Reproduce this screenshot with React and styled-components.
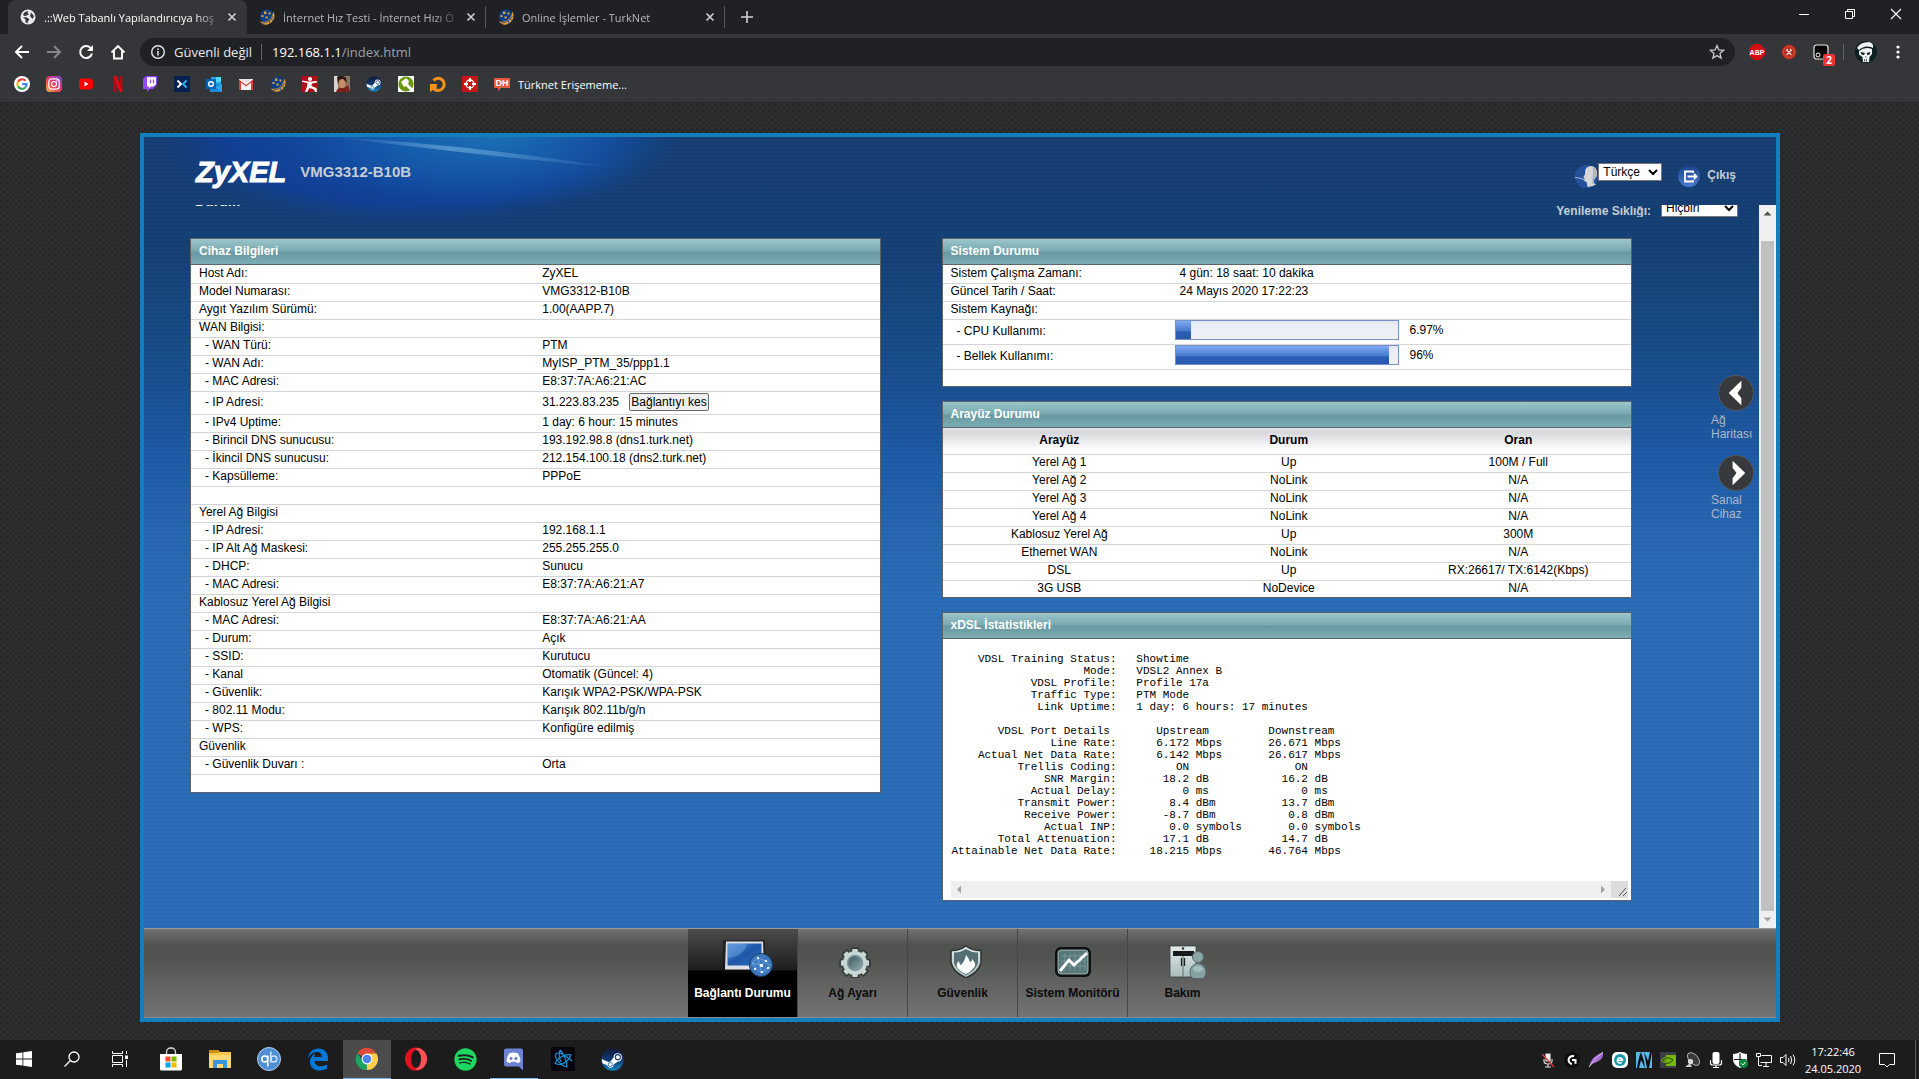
import React, { useState } from "react";
import styled, { createGlobalStyle } from 'styled-components';
import { FaSpotify } from "react-icons/fa";

const Global = createGlobalStyle`
    * { box-sizing: border-box; }
    body { margin: 0; background: #2b2c2e; }
    button, select, input, textarea { font-family: inherit; }
`;

const Screen = styled.div`
    display: flex;
    flex-direction: column;
    min-height: 100vh;
    font-family: "Liberation Sans", Arial, sans-serif;
    font-size: 12px;
`;

/* browser window */

const Browser = styled.header`
    font-family: "Open Sans", "Noto Sans", sans-serif;
    font-size: 11px;
    color: #e8eaed;
    background: #35363a;
    border-bottom: 1px solid #26272a;
`;

const TabStrip = styled.div`
    display: flex;
    height: 34px;
    padding-left: 8px;
    background: #202124;
`;

const Tab = styled.div`
    display: flex;
    align-items: center;
    width: 239px;
    padding: 0 6px 0 12px;
    border-radius: 8px 8px 0 0;
    color: ${(p) => (p.$active ? '#fff' : '#b4b8bd')};
    background: ${(p) => (p.$active ? '#35363a' : 'none')};
    border-right: 1px solid transparent;
    border-image: ${(p) => (p.$line ? 'linear-gradient(transparent 20%, #55565a 20%, #55565a 80%, transparent 80%) 1' : 'none')};
`;

const TabTitle = styled.span`
    flex: 1;
    margin: 0 4px 0 8px;
    white-space: nowrap;
    -webkit-mask-image: linear-gradient(90deg, #000 85%, transparent 102%);
    mask-image: linear-gradient(90deg, #000 85%, transparent 102%);
`;

const IconButton = styled.button`
    display: flex;
    align-items: center;
    justify-content: center;
    width: ${(p) => p.$w || 16}px;
    height: ${(p) => p.$h || 16}px;
    padding: 0;
    border: 0;
    background: none;
    color: inherit;
`;

const WindowButtons = styled.div`
    display: flex;
    margin-left: auto;
    color: #fff;
`;

const Toolbar = styled.div`
    display: flex;
    align-items: center;
    height: 36px;
    padding: 0 13px 0 6px;
`;

const Omnibox = styled.div`
    display: flex;
    flex: 1;
    align-items: center;
    height: 28px;
    margin: 0 6px;
    padding: 0 10px;
    border-radius: 14px;
    background: #202124;
    font-size: 13px;
`;

const Secure = styled.span`
    margin: 0 10px 0 8px;
    padding-right: 9px;
    border-right: 1px solid #5f6368;
    line-height: 16px;
    color: #e8eaed;
`;

const Address = styled.div`
    flex: 1;
    color: #9aa0a6;
    b { color: #fff; font-weight: 400; }
`;

const Extensions = styled.div`
    display: flex;
    align-items: center;
    gap: 16px;
    margin-left: 8px;
`;

const Divider = styled.i`
    width: 1px;
    height: 16px;
    margin: 0 -2px;
    background: #5f6368;
`;

const Avatar = styled.span`
    display: flex;
    margin: 0 -3px;
`;

const Badged = styled.span`
    position: relative;
    display: flex;
`;

const Badge = styled.span`
    position: absolute;
    left: 10px;
    top: 10px;
    width: 12px;
    height: 12px;
    border-radius: 2px;
    background: #ea3434;
    color: #fff;
    font-size: 10px;
    line-height: 12px;
    font-weight: 700;
    text-align: center;
`;

const Bookmarks = styled.nav`
    display: flex;
    align-items: center;
    gap: 16px;
    height: 32px;
    padding: 0 14px 4px;
    a { display: flex; align-items: center; gap: 8px; color: #fff; text-decoration: none; }
`;

/* router page */

const Page = styled.main`
    display: flex;
    flex: 1;
    padding: 30px 139px 18px 140px;
    background-color: #2d2e30;
    background-image: radial-gradient(circle at 1px 2px, #252628 1px, transparent 2px), radial-gradient(circle at 4px 5px, #252628 1px, transparent 2px);
    background-size: 6px 6px;
`;

const Frame = styled.div`
    position: relative;
    display: flex;
    flex: 1;
    flex-direction: column;
    border: 4px solid #137fc1;
    background:
        repeating-linear-gradient(rgba(10, 40, 90, 0.04) 0 2px, rgba(60, 140, 210, 0.03) 2px 4px),
        linear-gradient(#163d70 0, #153f73 110px, #17477f 180px, #1a4f91 250px, #1e5aa6 320px, #2767b1 400px, #2a6bb5 450px);
`;

const Flare = styled.svg`
    position: absolute;
    left: 0;
    top: 0;
`;

const RouterHeader = styled.div`
    position: relative;
    display: flex;
    align-items: flex-start;
    height: 68px;
    padding: 26px 40px 0 52px;
    color: #c5cdd6;
    font-weight: 700;
    line-height: 18px;
`;

const Logo = styled.span`
    font-size: 29px;
    font-style: italic;
    color: #fff;
    -webkit-text-stroke: 1px #fff;
`;

const Model = styled.span`
    flex: 1;
    margin-left: 14px;
    font-size: 15px;
`;

const Account = styled.div`
    display: flex;
    align-items: flex-start;
    svg { margin-top: 2px; }
`;

const Select = styled.select`
    width: ${(p) => p.$w}px;
    height: 18px;
    padding: 0;
    border: 1px solid #767676;
    border-radius: 0;
    background: #fff;
    color: #000;
    font-size: 12px;
`;

const Logout = styled.a`
    display: flex;
    align-items: center;
    gap: 7px;
    margin-left: 16px;
    color: inherit;
    text-decoration: none;
`;

const Scroller = styled.div`
    position: relative;
    display: flex;
    flex: 1;
    overflow: hidden;
`;

const Main = styled.div`
    flex: 1;
`;

/* the page is scrolled a little, so the first line is cut at its top */
const TopLine = styled.div`
    display: flex;
    align-items: flex-end;
    height: 12px;
    margin-bottom: 21px;
    padding: 0 21px 0 51px;
    overflow: hidden;
    color: #c5cdd6;
    font-weight: 700;
    label { margin-right: 10px; line-height: 12px; }
`;

const Title = styled.h1`
    flex: 1;
    margin: 0 0 8px;
    font-size: 14px;
    line-height: 16px;
    color: #fff;
`;

const Columns = styled.div`
    display: flex;
    align-items: flex-start;
    padding-left: 46px;
`;

const Cards = styled.div`
    display: flex;
    flex: 1;
    align-items: flex-start;
    gap: 61px;
`;

const Column = styled.div`
    display: flex;
    flex: 1;
    flex-direction: column;
    gap: 14px;
`;

const Card = styled.section`
    border: 1px solid #5c6368;
    background: #fff;
`;

const CardTitle = styled.h2`
    margin: 0;
    padding-left: 8px;
    height: 26px;
    font-size: 12px;
    line-height: 24px;
    color: #fff;
    border-bottom: 1px solid #59666b;
    background: linear-gradient(#9bc6cc 0, #79a9b1 12px, #6797a0 13px, #7cadb4 25px);
`;

const Table = styled.table`
    width: 100%;
    border-collapse: collapse;
    table-layout: fixed;
    td, th { height: 18px; padding: 0 0 2px; line-height: 14px; border-bottom: 1px solid #d3d5d8; white-space: nowrap; }
    tr:last-child td { border-bottom: 0; height: 17px; }
`;

const Row = styled.tr`
    height: ${(p) => (p.$tall ? 23 : 18)}px;
`;

const Label = styled.td`
    width: ${(p) => p.$w || '50%'};
    text-align: left;
    && { padding-left: ${(p) => (p.$sub ? 14 : 8)}px; }
`;

const Value = styled.td`
    && { padding-left: 7px; }
`;

const Meter = styled.td`
    && { height: 25px; padding: 0 0 3px 2px; }
    div { display: flex; align-items: center; gap: 11px; }
`;

const Bar = styled.span`
    width: 224px;
    height: 20px;
    border: 1px solid #7590c4;
    background: linear-gradient(#dfe5ec, #e9eef4 4px, #eef2f7);
    i { display: block; height: 18px; background: linear-gradient(#7fabf5, #4878cc 55%, #2c5db6 60%, #2a59ae); }
`;

const Grid = styled(Table)`
    td, th { text-align: center; padding-left: 4px; }
    th { height: 26px; background: linear-gradient(#e6e6e8, #d6d7da 4px, #fff 22px); }
`;

const DisconnectButton = styled.button`
    height: 18px;
    margin-left: 7px;
    padding: 0 1px;
    border: 1px solid #6b6b6b;
    border-radius: 2px;
    background: #efefef;
    font-size: 12px;
    line-height: 14px;
`;

const Stats = styled.div`
    padding: 2px 3px 2px 8px;
    textarea {
        display: block;
        width: 100%;
        height: 240px;
        padding: 0 1px;
        border: 0;
        outline: 0;
        resize: none;
        overflow: hidden;
        white-space: pre;
        color: #000;
        font-family: "Liberation Mono", "Courier New", monospace;
        font-size: 11px;
        line-height: 12px;
    }
`;

const HScroll = styled.div`
    display: flex;
    align-items: center;
    justify-content: space-between;
    height: 17px;
    background: #f0f0f0;
    svg { display: block; }
`;

const VScroll = styled.div`
    display: flex;
    flex-direction: column;
    align-items: center;
    width: 17px;
    background: #f0f0f0;
    svg { display: block; flex: none; }
    div { flex: 1; width: 13px; margin-top: 19px; background: #c1c1c1; }
`;

const Side = styled.nav`
    width: 127px;
    padding: 137px 0 0 79px;
`;

const SideLink = styled.a`
    display: block;
    width: 44px;
    margin-bottom: 14px;
    color: #aeb8c6;
    line-height: 14px;
    text-decoration: none;
    svg { display: block; margin: 0 0 2px 7px; }
`;

const BottomNav = styled.nav`
    display: flex;
    justify-content: center;
    height: 90px;
    padding-left: 6px;
    border-top: 1px solid #9a9a9c;
    border-bottom: 1px solid #8a8c8c;
    background: linear-gradient(#727272, #505250 16px, #525452 30px, #747474);
`;

const NavItem = styled.a`
    display: flex;
    flex-direction: column;
    align-items: center;
    width: 110px;
    padding-top: 9px;
    color: ${(p) => (p.$active ? '#fff' : '#0b0b0b')};
    background: ${(p) => (p.$active ? 'linear-gradient(#4c4c4c, #1d1d1d 41px, #000 42px)' : 'none')};
    border-right: 1px solid ${(p) => (p.$last ? 'transparent' : '#464646')};
    font-weight: 700;
    line-height: 16px;
    text-decoration: none;
    svg { margin-bottom: 7px; }
`;

/* taskbar */

const Taskbar = styled.footer`
    display: flex;
    height: 39px;
    background: #1c1c1c;
    color: #fff;
    font-family: "Open Sans", "Noto Sans", sans-serif;
`;

const Apps = styled.div`
    display: flex;
    gap: 1px;
    margin-left: 3px;
`;

const TaskButton = styled.button`
    display: flex;
    align-items: center;
    justify-content: center;
    width: 48px;
    padding: 0;
    border: 0;
    border-bottom: 1px solid ${(p) => (p.$open ? '#76b9ed' : 'transparent')};
    background: ${(p) => (p.$active ? '#4b4b4b' : 'none')};
    color: inherit;
`;

const Tray = styled.div`
    display: flex;
    align-items: center;
    gap: 8px;
    margin-left: auto;
    padding-right: 3px;
`;

const Clock = styled.time`
    width: 58px;
    font-size: 11px;
    line-height: 17px;
    text-align: center;
    white-space: nowrap;
`;

const TrayEnd = styled.i`
    width: 1px;
    height: 39px;
    margin-left: 3px;
    background: #5a5a5a;
`;

const Svg = ({ s = 16, w, h, box = '0 0 16 16', children }) => (
    <svg width={w || s} height={h || s} viewBox={box} fill="none" aria-hidden="true">{children}</svg>
);

const Close = () => <Svg s={16}><path d="M4.500 4.500l7 7m0-7l-7 7" stroke="#d0d2d5" strokeWidth="1.600" /></Svg>;

const Globe = () => (
    <Svg>
        <circle cx="8" cy="8" r="7.500" fill="#e8eaed" />
        <path d="M3 6q1-3.500 5-4L7.500 4 9 5 7 6.500 4.500 7z M3 8l4 .5 2.500 2L8 12l-.5 2.500L5.500 13V10.500z M11 3.500l3 3.500-1.500 3-2.500-3z" fill="#35363a" />
    </Svg>
);

const TurkNet = () => (
    <Svg>
        <circle cx="8" cy="7.500" r="7" fill="#0b3f8c" />
        <path d="M14.500 2.500c2.500 5 .5 11-6 13-3 .8-6-.5-7.500-3 6 1.500 12-1.500 13.500-10z" fill="#e9a032" />
        <path d="M3 14c5 0 9-2.500 11.500-7M11 15l-1-4M14 12l-2-3" stroke="#0b3f8c" strokeWidth=".8" />
        <path d="M5 2.500h2.400v2.400H5zM9.500 3.500h2v2h-2zM2.500 6h2v2h-2zM6.500 7.500h2.200v2H6.500z" fill="#e9a032" />
    </Svg>
);

const Steam = ({ s }) => (
    <Svg s={s} box="0 0 24 24">
        <defs><linearGradient id="st" x1="0" y1="0" x2="0" y2="1"><stop offset="0" stopColor="#141a3a" /><stop offset=".5" stopColor="#10386f" /><stop offset="1" stopColor="#1687bd" /></linearGradient></defs>
        <circle cx="12" cy="12" r="11.800" fill="url(#st)" />
        <path d="M.8 11.500l7 3a3.500 3.500 0 0 1 2-.2l3.400-4.600a4.300 4.300 0 1 1 4.500 4.300l-4.600 3.300a3.400 3.400 0 0 1-6.700.8L1.500 16z" fill="#fff" />
        <circle cx="17.600" cy="9.600" r="2.700" fill="#fff" stroke="#10386f" strokeWidth="1.100" />
        <circle cx="9.700" cy="17.200" r="2.100" fill="none" stroke="#1668a0" strokeWidth=".9" />
    </Svg>
);

const bookmarks = [
    ['Google', <Svg>
        <circle cx="8" cy="8" r="8" fill="#fff" />
        <path d="M11.600 4.800A4.700 4.700 0 0 0 4 5.700" stroke="#ea4335" strokeWidth="2.200" />
        <path d="M4 5.700a4.600 4.600 0 0 0 0 4.700" stroke="#fbbc05" strokeWidth="2.200" />
        <path d="M4 10.400a4.700 4.700 0 0 0 7.300 1.100" stroke="#34a853" strokeWidth="2.200" />
        <path d="M11.300 11.500c1-.9 1.400-2 1.300-3.400H8.200" stroke="#4285f4" strokeWidth="2.200" />
    </Svg>],
    ['Instagram', <Svg>
        <defs><linearGradient id="ig" x1="0" y1="1" x2="1" y2="0"><stop offset="0" stopColor="#fdc04c" /><stop offset=".35" stopColor="#f4514b" /><stop offset=".65" stopColor="#cd3494" /><stop offset="1" stopColor="#5c53d2" /></linearGradient></defs>
        <rect width="16" height="16" rx="4" fill="url(#ig)" />
        <rect x="2.800" y="2.800" width="10.400" height="10.400" rx="3" stroke="#fff" strokeWidth="1.200" />
        <circle cx="8" cy="8" r="2.500" stroke="#fff" strokeWidth="1.200" /><circle cx="11" cy="5" r=".8" fill="#fff" />
    </Svg>],
    ['YouTube', <Svg><rect x="1" y="2.500" width="14" height="11" rx="3" fill="#f00" /><path d="M6.500 5.500v5l4-2.500z" fill="#fff" /></Svg>],
    ['Netflix', <Svg><path d="M3.500 0h3v16h-3zM9.500 0h3v16h-3z" fill="#b00b14" /><path d="M3.500 0h3l6 16h-3z" fill="#e50914" /></Svg>],
    ['Twitch', <Svg><path d="M4 0h11v9l-4 4H8l-3 3v-3H1V3z" fill="#9146ff" /><path d="M5 1.200h9V8l-2.500 2.500H9l-2 2v-2H5z" fill="#fff" /><path d="M8.500 3.500v3.800M11.500 3.500v3.800" stroke="#9146ff" strokeWidth="1.300" /></Svg>],
    ['Mixer', <Svg><rect width="16" height="16" fill="#062052" /><path d="M3.500 4.500L7 8l-3.500 3.500" stroke="#fff" strokeWidth="1.900" /><path d="M12.500 4.500L9 8l3.500 3.500" stroke="#1fbaed" strokeWidth="1.900" /></Svg>],
    ['Outlook', <Svg>
        <path d="M5 1h10v9H5z" fill="#28a8ea" /><path d="M10 1h5v5h-5z" fill="#50d9ff" /><path d="M4 8l12 0v8H4z" fill="#1490df" /><path d="M16 8v8L9 11z" fill="#28a8ea" />
        <rect y="3" width="10" height="10" rx="1" fill="#0364b8" /><circle cx="5" cy="8" r="2.300" stroke="#fff" strokeWidth="1.400" />
    </Svg>],
    ['Gmail', <Svg><path d="M1 3h14v11H1z" fill="#f1f1f1" /><path d="M1 14V3.500L8 9l7-5.500V14h-2V6.500L8 10.500 3 6.500V14z" fill="#d93f35" /><path d="M3 3h10L8 7z" fill="#e6e0df" /></Svg>],
    ['TurkNet', <TurkNet />],
    ['Spor', <Svg><rect width="16" height="16" fill="#b00d17" /><circle cx="8" cy="3" r="2.100" fill="#fff" /><path d="M0 4.500l6 1h3l6-.5v1.500l-5 1-.5 2.500 5 2 .5 4h-2l-1-2.500-4.500-1.500L5 16H3l2-5.500L5.500 7 0 6z" fill="#fff" /></Svg>],
    ['Portre', <Svg><rect width="16" height="16" fill="#8a7560" /><path d="M0 0h4v16H0z" fill="#d9d4c9" /><path d="M3 1q5-3 9 1l1 5-2-2H5L4 9z" fill="#2c1712" /><ellipse cx="8" cy="7.500" rx="3.300" ry="4.500" fill="#c98d66" /><path d="M2 16q1-4 5-4l3 0 4-3 2 7z" fill="#7c2019" /></Svg>],
    ['Steam', <Steam s={16} />],
    ['Anahtar', <Svg><rect width="16" height="16" fill="#fff" /><circle cx="8" cy="8" r="7.600" fill="#6b9710" /><path d="M3 6l5-4 3 3-1 3 5 5-2 2-5-5-2 1z" fill="#fff" /></Svg>],
    ['Yenile', <Svg><path d="M3.500 4.500A6 6 0 1 1 6 14" stroke="#f6911e" strokeWidth="3" /><path d="M0 8l7 0-1 8-3-2-3 2z" fill="#f6911e" /></Svg>],
    ['Hedef', <Svg><rect width="16" height="16" fill="#c81414" /><circle cx="8" cy="8" r="4" stroke="#fff" strokeWidth="1.300" /><path d="M8 2v4M8 10v4M2 8h4M10 8h4" stroke="#fff" strokeWidth="2" /></Svg>],
];

const infoRows = [
    ['Host Adı:', 'ZyXEL'],
    ['Model Numarası:', 'VMG3312-B10B'],
    ['Aygıt Yazılım Sürümü:', '1.00(AAPP.7)'],
    ['WAN Bilgisi:'],
    ['- WAN Türü:', 'PTM'],
    ['- WAN Adı:', 'MyISP_PTM_35/ppp1.1'],
    ['- MAC Adresi:', 'E8:37:7A:A6:21:AC'],
    ['- IP Adresi:', '31.223.83.235', 'Bağlantıyı kes'],
    ['- IPv4 Uptime:', '1 day: 6 hour: 15 minutes'],
    ['- Birincil DNS sunucusu:', '193.192.98.8 (dns1.turk.net)'],
    ['- İkincil DNS sunucusu:', '212.154.100.18 (dns2.turk.net)'],
    ['- Kapsülleme:', 'PPPoE'],
    [''],
    ['Yerel Ağ Bilgisi'],
    ['- IP Adresi:', '192.168.1.1'],
    ['- IP Alt Ağ Maskesi:', '255.255.255.0'],
    ['- DHCP:', 'Sunucu'],
    ['- MAC Adresi:', 'E8:37:7A:A6:21:A7'],
    ['Kablosuz Yerel Ağ Bilgisi'],
    ['- MAC Adresi:', 'E8:37:7A:A6:21:AA'],
    ['- Durum:', 'Açık'],
    ['- SSID:', 'Kurutucu'],
    ['- Kanal', 'Otomatik (Güncel: 4)'],
    ['- Güvenlik:', 'Karışık WPA2-PSK/WPA-PSK'],
    ['- 802.11 Modu:', 'Karışık 802.11b/g/n'],
    ['- WPS:', 'Konfigüre edilmiş'],
    ['Güvenlik'],
    ['- Güvenlik Duvarı :', 'Orta'],
    [''],
];

const interfaces = [
    ['Yerel Ağ 1', 'Up', '100M / Full'],
    ['Yerel Ağ 2', 'NoLink', 'N/A'],
    ['Yerel Ağ 3', 'NoLink', 'N/A'],
    ['Yerel Ağ 4', 'NoLink', 'N/A'],
    ['Kablosuz Yerel Ağ', 'Up', '300M'],
    ['Ethernet WAN', 'NoLink', 'N/A'],
    ['DSL', 'Up', 'RX:26617/ TX:6142(Kbps)'],
    ['3G USB', 'NoDevice', 'N/A'],
];

const line = (name, value) => name.padStart(25) + '   ' + value;
const port = (name, up, down, unit = '') =>
    name.padStart(25) + up.padStart(11) + (' ' + unit).padEnd(11) + down.padStart(7) + ' ' + unit;

const xdslText = [
    '',
    line('VDSL Training Status:', 'Showtime'),
    line('Mode:', 'VDSL2 Annex B'),
    line('VDSL Profile:', 'Profile 17a'),
    line('Traffic Type:', 'PTM Mode'),
    line('Link Uptime:', '1 day: 6 hours: 17 minutes'),
    '',
    line('VDSL Port Details ', '   Upstream         Downstream'),
    port('Line Rate:', '6.172', '26.671', 'Mbps'),
    port('Actual Net Data Rate:', '6.142', '26.617', 'Mbps'),
    port('Trellis Coding:', 'ON', 'ON'),
    port('SNR Margin:', '18.2', '16.2', 'dB'),
    port('Actual Delay:', '0', '0', 'ms'),
    port('Transmit Power:', '8.4', '13.7', 'dBm'),
    port('Receive Power:', '-8.7', '0.8', 'dBm'),
    port('Actual INP:', '0.0', '0.0', 'symbols'),
    port('Total Attenuation:', '17.1', '14.7', 'dB'),
    port('Attainable Net Data Rate:', '18.215', '46.764', 'Mbps'),
].join('\n');

const metal = (
    <defs>
        <linearGradient id="mt" x1="0" y1="0" x2="0" y2="1"><stop offset="0" stopColor="#e3eceb" /><stop offset="1" stopColor="#a9bbbb" /></linearGradient>
        <linearGradient id="dk" x1="0" y1="0" x2="1" y2="1"><stop offset="0" stopColor="#3c5358" /><stop offset="1" stopColor="#8fb0b2" /></linearGradient>
        <linearGradient id="bl" x1="0" y1="0" x2="1" y2="1"><stop offset="0" stopColor="#4f8fd6" /><stop offset=".5" stopColor="#1e57a8" /><stop offset="1" stopColor="#2f6fc0" /></linearGradient>
    </defs>
);

const navItems = [
    ['Bağlantı Durumu', <Svg w={60} h={40} box="0 -1 60 40">
        {metal}
        <path d="M10 1h42v33H9z" fill="#111" opacity=".5" />
        <path d="M13 2.500h37l1 28H12z" fill="#dfe2e6" /><path d="M14.500 4.500h34v22h-34z" fill="url(#bl)" />
        <path d="M14.500 4.500h20q-3 12-20 15z" fill="#7fb2ea" opacity=".4" />
        <circle cx="48" cy="26" r="11.500" fill="#3f78bf" stroke="#16395f" />
        <path d="M39 24l6-5 8 3 4 6-9 6-5-5zM45 19l3 15M53 22l-5 4-9-2" stroke="#7db4ea" strokeWidth=".7" />
        <path d="M44 18h2v2h-2zM52 21h2v2h-2zM47 25h3v3h-3zM41 29h2v2h-2zM54 28h2v2h-2zM48 32h2v2h-2z" fill="#e8f4ff" />
    </Svg>],
    ['Ağ Ayarı', <Svg w={40} h={40} box="-22 -25 40 40">
        <g stroke="#383d3d" strokeWidth="2">{[0, 45, 90, 135].map((a) => <rect key={a} x="-3.500" y="-15" width="7" height="30" rx="1" fill="#b9c8c8" transform={`rotate(${a})`} />)}</g>
        <circle r="12" fill="#c9d6d6" />
        {[0, 45, 90, 135].map((a) => <rect key={a} x="-2.500" y="-14" width="5" height="28" rx="1" fill="#c9d6d6" transform={`rotate(${a})`} />)}
        <circle r="7.500" fill="url(#dk)" stroke="#80979b" strokeWidth="1.500" />
    </Svg>],
    ['Güvenlik', <Svg w={40} h={40} box="-23 -24 40 40">
        <path d="M0-16q7 5 15 4.500v12Q13 10 0 16-13 10-15 .5v-12Q-7-11 0-16z" fill="url(#mt)" stroke="#2b3030" strokeWidth="1.500" />
        <path d="M0-13q6 4 12 3.500V1Q10 8 0 13-10 8-12 1V-9.500Q-6-9 0-13z" fill="#557074" />
        <path d="M0-7q3 3 4 7 2 0 2-3 4 4 3 7-3 5-9 8-7-3-9-7-1-4 2-6 0 3 2 4 4-4 5-10z" fill="#fff" />
    </Svg>],
    ['Sistem Monitörü', <Svg w={40} h={40} box="-20 -24 40 40">
        <rect x="-18" y="-15" width="36" height="30" rx="6" fill="#0a1110" />
        <rect x="-15" y="-12" width="30" height="24" rx="3" fill="#58777a" stroke="#bccccc" strokeWidth=".8" />
        <path d="M-8-9V9M-3-9V9M2-9V9M7-9V9M12-9V9M-12-6h24M-12-1h24M-12 4h24" stroke="#8ba7a8" strokeWidth=".6" />
        <path d="M-13 9L-4-2l5 5L14-9" stroke="#fff" strokeWidth="2.800" />
    </Svg>],
    ['Bakım', <Svg w={56} h={40} box="-36 -24 56 40">
        <path d="M-21-16H5v31h-26z" fill="url(#mt)" stroke="#3b4141" strokeWidth=".8" />
        <path d="M-18-11H3v5h-21z" fill="#161c1c" /><path d="M-8-6V15" stroke="#5d6a6a" strokeWidth="1" /><path d="M-9.500-4v8M-6.500-4v8" stroke="#1b2222" strokeWidth="1.300" />
        <circle cx="-8" cy="-13.500" r="1.300" fill="#333" />
        <circle cx="7" cy="-5" r="5.500" fill="#89a5a6" stroke="#57696a" /><ellipse cx="7" cy="10" rx="8" ry="8.500" fill="#86a3a4" stroke="#57696a" /><ellipse cx="7" cy="7" rx="5" ry="3" fill="#b3cbcb" opacity=".7" />
    </Svg>],
];

const apps = [
    ['Store', <Svg s={24} box="0 0 24 24"><path d="M7.500 7V5a4 4 0 0 1 4-4h1a4 4 0 0 1 4 4v2" stroke="#ddd" strokeWidth="1.300" /><path d="M1 7h22v15a1.500 1.500 0 0 1-1.500 1.500h-19A1.500 1.500 0 0 1 1 22z" fill="#fff" /><path d="M6.500 9.500h5v5h-5z" fill="#f25022" /><path d="M12.500 9.500h5v5h-5z" fill="#7fba00" /><path d="M6.500 15.500h5v5h-5z" fill="#00a4ef" /><path d="M12.500 15.500h5v5h-5z" fill="#ffb900" /></Svg>],
    ['Dosya Gezgini', <Svg s={24} box="0 0 24 24"><path d="M1 3h9l2 2h11v16H1z" fill="#f8c545" /><path d="M1 3h9l1 3H1z" fill="#c98e15" /><path d="M1 8h22v13H1z" fill="#fcd873" /><path d="M5 13h14v8h-4v-4H9v4H5z" fill="#3b96dd" /></Svg>],
    ['qBittorrent', <Svg s={24} box="0 0 24 24"><circle cx="12" cy="12" r="11.500" fill="#4f8fd4" stroke="#b5d0ee" /><circle cx="7.800" cy="12" r="3" stroke="#fff" strokeWidth="1.500" /><path d="M10.800 8.500v11" stroke="#fff" strokeWidth="1.500" /><circle cx="16.800" cy="12" r="3" stroke="#cfe3f8" strokeWidth="1.500" /><path d="M13.800 4.500v11" stroke="#cfe3f8" strokeWidth="1.500" /></Svg>],
    ['Edge', <Svg s={24} box="0 0 24 24"><path d="M2 11C3 5 7 1.500 12.500 1.500c6 0 9.500 4.500 9.500 9.500v3H8.500c.3 5 6 7 12.500 3.500v4.300C12 26 3.500 22 4 14c.3-4 3-6.500 5.500-7.500C8.300 8 8.300 9.500 8.300 10h7.500c0-3-1.500-5-5-5C7 5 4 8 2 11z" fill="#0078d7" /></Svg>],
    ['Chrome', <Svg s={24} box="0 0 24 24"><path d="M12 12L2.500 6A11 11 0 0 1 21.500 6.500H12z" fill="#dd4b3e" /><path d="M12 12l9.500-5.500A11 11 0 0 1 11.500 23z" fill="#fdd04f" /><path d="M12 12l-.5 11A11 11 0 0 1 2.500 6l5 8.500z" fill="#1ba462" /><path d="M12 6.500h9.500L17 14.500l-5.500 8.500 4.500-9z" fill="#fdd04f" /><circle cx="12" cy="12" r="5.400" fill="#fff" /><circle cx="12" cy="12" r="4.300" fill="#4a84ee" /></Svg>],
    ['Opera', <Svg s={24} box="0 0 24 24"><ellipse cx="12" cy="12" rx="11" ry="11.500" fill="#e3101f" /><path d="M14 .8a11.500 11.500 0 0 1 0 22.500l-3-1.300c8-4 8-16 0-20z" fill="#fa5059" /><ellipse cx="12" cy="12" rx="5" ry="9" fill="#1c1c1c" /></Svg>],
    ['Spotify', <FaSpotify size={23} color="#1ed760" />],
    ['Discord', <Svg s={24} box="0 0 24 24"><path d="M4 1.500h15a2 2 0 0 1 2 2v20l-4-4H4a2 2 0 0 1-2-2v-14a2 2 0 0 1 2-2z" fill="#6d83d1" /><path d="M7 6.500q4.500-2 9 0 2.500 4 2.500 8-2 1.700-4 1.500l-.8-1.300h-4.400L8.500 16q-2 .2-4-1.500 0-4 2.500-8z" fill="#fff" /><ellipse cx="9" cy="11.500" rx="1.500" ry="1.700" fill="#6d83d1" /><ellipse cx="14" cy="11.500" rx="1.500" ry="1.700" fill="#6d83d1" /></Svg>],
    ['Battle.net', <Svg s={24} box="0 0 24 24"><rect width="24" height="24" rx="1.500" fill="#04060b" /><g stroke="#1593dd" strokeWidth="1.200"><path d="M9 3q3 3 5 8t2 9q-5-1-9-6t-2-7 6 0 10 7M4 16q3-5 8-7t8-1q-2 5-7 8t-9 0zM9 3q-2 6 1 12" /></g></Svg>],
    ['Steam', <Steam s={23} />],
];

const tray = [
    <Svg><path d="M6 2h4v7H6zM4 7v2q0 3 4 3t4-3V7M8 12v3M5 15h6" stroke="#ddd" strokeWidth="1.200" /><path d="M6 2h4v7H6z" fill="#eee" /><path d="M2 2l12 13" stroke="#e0393c" strokeWidth="1.400" /></Svg>,
    <Svg><circle cx="8" cy="8" r="8" fill="#0f0f0f" /><path d="M10 4.300A4 4 0 1 0 8 12M8 8h3.500v3.800" stroke="#fff" strokeWidth="2" /></Svg>,
    <Svg><path d="M1 15Q3 4 15 0q1 7-6 10l-5 2z" fill="#a36bd0" /><path d="M1 15Q6 7 15 0" stroke="#d9b8f0" /></Svg>,
    <Svg><rect width="16" height="16" rx="5" fill="#f4fbfb" /><circle cx="8" cy="8" r="6" fill="#1b98a5" /><path d="M5.500 8.200h5A2.600 2.600 0 1 0 9.800 10.300" stroke="#fff" strokeWidth="1.600" /></Svg>,
    <Svg><rect width="16" height="16" fill="#5ab8e6" /><path d="M1 16Q3 4 5 0l3 9 1 7L5 8l-2 8zM8 0q3 6 4 9l2-9h2l-3 16h-2z" fill="#0b1014" /></Svg>,
    <Svg><rect width="16" height="16" fill="#3b4048" /><path d="M6 3h10v11H6z" fill="#76b900" /><path d="M1 8.500Q7 2 13 8q-5 6-12 .5zM4 8.500q3-3 6 0-3 3-6 0z" stroke="#76b900" /><path d="M6 6q4-1 7 2-3 4-7 3.500" stroke="#26400a" /></Svg>,
    <Svg><ellipse cx="9.500" cy="7" rx="4.500" ry="7.500" transform="rotate(-42 9.500 7)" fill="#3a3a3a" stroke="#aaa" /><circle cx="6.500" cy="9.500" r="2.600" fill="#ddd" /><path d="M1 15l5-4 2 4z" fill="#ccc" /></Svg>,
    <Svg><rect x="4.500" y="0" width="7" height="12" rx="2" fill="#fff" /><path d="M2.500 8v3q0 2 2 2h7q2 0 2-2V8M8 13v2M5 15.500h6" stroke="#fff" strokeWidth="1.100" /></Svg>,
    <Svg><path d="M8 0q3 2 7 2v5q0 6-7 9Q1 13 1 7V2q4 0 7-2z" fill="#fff" /><path d="M8 1.500V14M2 7.500h12" stroke="#1c1c1c" strokeWidth="1.200" /><circle cx="11.500" cy="11.500" r="4.500" fill="#10893e" /><path d="M9.500 11.500l1.500 1.500 2.500-3" stroke="#fff" /></Svg>,
    <Svg><path d="M5.500 3.500h10v7h-11M10 10.500v3.500M7 14.500h6M.5 1.500h4v3h-4zM2.500 4.500v9H6" stroke="#fff" /></Svg>,
    <Svg><path d="M.5 5.500h2.500l3-3v11l-3-3H.5zM8.500 6q1 2 0 4M10.500 4q2.500 4 0 8M13 2.500q3.500 5.500 0 11" stroke="#fff" /></Svg>,
];

const Arrow = ({ d, fill = '#505050' }) => <Svg s={17} box="0 0 17 17"><path d={d} fill={fill} /></Svg>;

const sideLinks = [
    ['Ağ Haritası', 'M24 6v7l-4 5.500 4 5.500v7L11 18.500z'],
    ['Sanal Cihaz', 'M15 6v7l4 5.500-4 5.500v7l13-12.500z'],
];

function App() {

    const [lang, setLang] = useState('Türkçe');
    const [refresh, setRefresh] = useState('Hiçbiri');

    return (
        <Screen>
            <Global />
            <Browser>
                <TabStrip>
                    <Tab $active>
                        <Globe /><TabTitle>.::Web Tabanlı Yapılandırıcıya hoş</TabTitle>
                        <IconButton aria-label="Kapat"><Close /></IconButton>
                    </Tab>
                    <Tab $line>
                        <TurkNet /><TabTitle>İnternet Hız Testi - İnternet Hızı Ö</TabTitle>
                        <IconButton aria-label="Kapat"><Close /></IconButton>
                    </Tab>
                    <Tab $line>
                        <TurkNet /><TabTitle>Online İşlemler - TurkNet</TabTitle>
                        <IconButton aria-label="Kapat"><Close /></IconButton>
                    </Tab>
                    <IconButton aria-label="Yeni sekme" $w={44} $h={34}><Svg><path d="M8 2v12M2 8h12" stroke="#d0d2d5" strokeWidth="1.600" /></Svg></IconButton>
                    <WindowButtons>
                        <IconButton aria-label="Simge durumu" $w={46} $h={28}><Svg><path d="M3 8.500h10" stroke="#fff" /></Svg></IconButton>
                        <IconButton aria-label="Geri yükle" $w={46} $h={28}><Svg><path d="M3.500 5.500h7v7h-7zM5.500 5.500v-2h7v7h-2" stroke="#fff" /></Svg></IconButton>
                        <IconButton aria-label="Kapat" $w={46} $h={28}><Svg><path d="M3 3l10 10M13 3L3 13" stroke="#fff" strokeWidth="1.200" /></Svg></IconButton>
                    </WindowButtons>
                </TabStrip>
                <Toolbar>
                    <IconButton aria-label="Geri" $w={32} $h={32}><Svg><path d="M15 8H2M8 2L2 8l6 6" stroke="#fff" strokeWidth="2" /></Svg></IconButton>
                    <IconButton aria-label="İleri" $w={32} $h={32}><Svg><path d="M1 8h13M8 2l6 6-6 6" stroke="#85878a" strokeWidth="2" /></Svg></IconButton>
                    <IconButton aria-label="Yenile" $w={32} $h={32}><Svg><path d="M13 4.500A6 6 0 1 0 14 9.500" stroke="#fff" strokeWidth="2" /><path d="M15 1v6H9z" fill="#fff" /></Svg></IconButton>
                    <IconButton aria-label="Ana sayfa" $w={32} $h={32}><Svg><path d="M1.500 8.500L8 2l6.500 6.500M4 7v7.500h8V7" stroke="#fff" strokeWidth="1.900" /></Svg></IconButton>
                    <Omnibox>
                        <Svg><circle cx="8" cy="8" r="6.300" stroke="#e8eaed" strokeWidth="1.400" /><path d="M8 7v4.500M8 4.500V6" stroke="#e8eaed" strokeWidth="1.500" /></Svg>
                        <Secure>Güvenli değil</Secure>
                        <Address><b>192.168.1.1</b>/index.html</Address>
                        <IconButton aria-label="Yer işareti"><Svg><path d="M8 1.500l1.900 4.400 4.700.4-3.600 3.100 1.100 4.700L8 11.600l-4.100 2.500L5 9.400 1.400 6.300l4.700-.4z" stroke="#c7c9cc" strokeWidth="1.300" /></Svg></IconButton>
                    </Omnibox>
                    <Extensions>
                        <Svg><path d="M5 0h6l5 5v6l-5 5H5l-5-5V5z" fill="#d40d12" /><text x="8" y="11" fill="#fff" fontFamily="Liberation Sans" fontSize="7" fontWeight="700" textAnchor="middle">ABP</text></Svg>
                        <Svg><circle cx="8" cy="8" r="7.500" fill="#b02a1c" /><circle cx="8" cy="8" r="5.500" stroke="#d95543" /><path d="M5.500 6l5 5M10.500 6l-5 5M5 6.500l2-1.500M11 6.500L9 5" stroke="#f3d3cd" strokeWidth="1.200" /></Svg>
                        <Badged>
                            <Svg><rect x="1" y="1" width="14" height="14" rx="2.500" fill="#050505" stroke="#e9e9e9" strokeWidth="1.200" /><circle cx="5" cy="11" r="2" stroke="#fff" /></Svg>
                            <Badge>2</Badge>
                        </Badged>
                        <Divider />
                        <Avatar>
                            <Svg s={22} box="0 0 22 22"><circle cx="11" cy="11" r="11" fill="#0e2022" /><path d="M2 7Q5 1 14 1q5 1 4 6l-2-1Q9 4 4 9z" fill="#eef1ef" /><path d="M4 10q6-5 13-2l0 5-2.500 3-.5 5h-6l-.5-5L4 13.500z" fill="#eef1ef" /><path d="M5.500 11l4.500 1-1 2-2.500-.5zM15.500 11l-4 1 1 2 2-.5z" fill="#0e2022" /><path d="M9.500 18v2.500M11.500 18v2.500M10 16h1.500" stroke="#0e2022" strokeWidth=".7" /></Svg>
                        </Avatar>
                        <Svg><circle cx="8" cy="3" r="1.600" fill="#fff" /><circle cx="8" cy="8" r="1.600" fill="#fff" /><circle cx="8" cy="13" r="1.600" fill="#fff" /></Svg>
                    </Extensions>
                </Toolbar>
                <Bookmarks>
                    {bookmarks.map(([name, icon], index) => (
                        <a href="#" key={index} aria-label={name}>{icon}</a>
                    ))}
                    <a href="#">
                        <Svg><path d="M0 2h16v10H7l-3 3v-3H0z" fill="#e8583f" /><text x="8" y="10" fill="#fff" fontFamily="Liberation Sans" fontSize="9" fontWeight="700" textAnchor="middle">DH</text></Svg>
                        Türknet Erişememe...
                    </a>
                </Bookmarks>
            </Browser>

            <Page>
                <Frame>
                    <Flare width="560" height="110" viewBox="0 0 560 110">
                        <defs>
                            <radialGradient id="f1" cx=".5" cy="0" r=".5" gradientTransform="matrix(1 0 0 2 0 0)"><stop offset="0" stopColor="#1155ac" /><stop offset=".7" stopColor="#113f9c" stopOpacity=".8" /><stop offset="1" stopColor="#133c80" stopOpacity="0" /></radialGradient>
                            <radialGradient id="f2" cx=".62" cy="0" r=".34" gradientTransform="matrix(1 0 0 2.200 0 0)"><stop offset="0" stopColor="#1c70b4" /><stop offset="1" stopColor="#1560b0" stopOpacity="0" /></radialGradient>
                            <linearGradient id="f3"><stop offset="0" stopColor="#8cc4ea" stopOpacity="0" /><stop offset=".4" stopColor="#8cc4ea" stopOpacity=".5" /><stop offset="1" stopColor="#8cc4ea" stopOpacity="0" /></linearGradient>
                        </defs>
                        <rect width="540" height="96" fill="url(#f1)" />
                        <rect width="560" height="96" fill="url(#f2)" />
                        <path d="M190 0Q330 8 480 32 350 20 190 0z" fill="url(#f3)" />
                    </Flare>
                    <RouterHeader>
                        <Logo>ZyXEL</Logo>
                        <Model>VMG3312-B10B</Model>
                        <Account>
                            <Svg s={23} box="0 0 22 22"><circle cx="11" cy="11" r="11" fill="#27509c" /><path d="M0 12q8 0 14 6" stroke="#9db6dd" /><path d="M10 4q2-3 6-3 5 1 5 7 0 4-3 6v3l2 2q-3 2-8 2l-1-5-2-.5 0-3-1-1 1.500-2.500z" fill="#d5d7d8" /><path d="M17 2q4 1 4 6 0 4-3 6v3l2 2-4-1 1-8z" fill="#b5b8bb" /></Svg>
                            <Select $w={64} aria-label="Dil" value={lang} onChange={(event) => setLang(event.target.value)}>
                                <option>Türkçe</option>
                                <option>English</option>
                            </Select>
                            <Logout href="#">
                                <Svg s={22} box="0 0 22 22"><defs><linearGradient id="lo" x1="0" y1="0" x2="0" y2="1"><stop offset="0" stopColor="#1b3f86" /><stop offset="1" stopColor="#4a7bd0" /></linearGradient></defs><circle cx="11" cy="11" r="11" fill="url(#lo)" /><path d="M15 8V6.500H7v10h8V15M9.500 11.500H18M16 9l2.500 2.500L16 14" stroke="#fff" strokeWidth="1.800" /></Svg>
                                Çıkış
                            </Logout>
                        </Account>
                    </RouterHeader>
                    <Scroller>
                        <Main>
                            <TopLine>
                                <Title>Durum</Title>
                                <label htmlFor="refresh">Yenileme Sıklığı:</label>
                                <Select $w={77} id="refresh" value={refresh} onChange={(event) => setRefresh(event.target.value)}>
                                    <option>Hiçbiri</option>
                                    <option>10 saniye</option>
                                </Select>
                            </TopLine>
                            <Columns>
                                <Cards>
                                    <Column>
                                        <Card>
                                            <CardTitle>Cihaz Bilgileri</CardTitle>
                                            <Table>
                                                <tbody>
                                                    {infoRows.map(([label, value, action], index) => (
                                                        <Row key={index} $tall={action}>
                                                            <Label $sub={label.startsWith('-')}>{label}</Label>
                                                            <Value>{value}{action && <>&nbsp;<DisconnectButton>{action}</DisconnectButton></>}</Value>
                                                        </Row>
                                                    ))}
                                                </tbody>
                                            </Table>
                                        </Card>
                                    </Column>
                                    <Column>
                                        <Card>
                                            <CardTitle>Sistem Durumu</CardTitle>
                                            <Table>
                                                <tbody>
                                                    <tr><Label $w="230px">Sistem Çalışma Zamanı:</Label><Value>4 gün: 18 saat: 10 dakika</Value></tr>
                                                    <tr><Label>Güncel Tarih / Saat:</Label><Value>24 Mayıs 2020 17:22:23</Value></tr>
                                                    <tr><Label>Sistem Kaynağı:</Label><Value /></tr>
                                                    {[['CPU', '6.97%'], ['Bellek', '96%']].map(([name, load]) => (
                                                        <tr key={name}>
                                                            <Label $sub>- {name} Kullanımı:</Label>
                                                            <Meter><div><Bar><i style={{ width: load }} /></Bar>{load}</div></Meter>
                                                        </tr>
                                                    ))}
                                                    <tr><td colSpan="2" /></tr>
                                                </tbody>
                                            </Table>
                                        </Card>
                                        <Card>
                                            <CardTitle>Arayüz Durumu</CardTitle>
                                            <Grid>
                                                <thead>
                                                    <tr><th>Arayüz</th><th>Durum</th><th>Oran</th></tr>
                                                </thead>
                                                <tbody>
                                                    {interfaces.map((row) => (
                                                        <tr key={row[0]}>{row.map((cell, index) => <td key={index}>{cell}</td>)}</tr>
                                                    ))}
                                                </tbody>
                                            </Grid>
                                        </Card>
                                        <Card>
                                            <CardTitle>xDSL İstatistikleri</CardTitle>
                                            <Stats>
                                                <textarea readOnly aria-label="xDSL İstatistikleri" value={xdslText} />
                                                <HScroll>
                                                    <Arrow d="M10 4.500v8L6 8.500z" fill="#a3a3a3" />
                                                    <Svg w={42} h={17} box="0 0 42 17"><path d="M15 4.500v8l4-4z" fill="#a3a3a3" /><path d="M25 0h17v17H25z" fill="#dcdcdc" /><path d="M33 15l7-8M37 15l4-4" stroke="#555" /></Svg>
                                                </HScroll>
                                            </Stats>
                                        </Card>
                                    </Column>
                                </Cards>
                                <Side>
                                    {sideLinks.map(([label, d]) => (
                                        <SideLink href="#" key={label}>
                                            <Svg s={36} box="0 0 37 37"><circle cx="18.500" cy="18.500" r="18" fill="#38393d" stroke="#55585c" /><path d={d} fill="#fff" /></Svg>
                                            {label}
                                        </SideLink>
                                    ))}
                                </Side>
                            </Columns>
                        </Main>
                        <VScroll>
                            <Arrow d="M8.500 6.500l4 4h-8z" />
                            <div />
                            <Arrow d="M8.500 10.500l4-4h-8z" fill="#a3a3a3" />
                        </VScroll>
                    </Scroller>
                    <BottomNav>
                        {navItems.map(([label, icon], index) => (
                            <NavItem href="#" key={label} $active={index === 0} $last={index === 4}>{icon}{label}</NavItem>
                        ))}
                    </BottomNav>
                </Frame>
            </Page>

            <Taskbar>
                <TaskButton aria-label="Başlat"><Svg><path d="M0 2.300l6.500-.9v6.200H0zM7.300 1.300L16 0v7.600H7.300zM0 8.400h6.500v6.200L0 13.700zM7.300 8.400H16V16l-8.700-1.300z" fill="#fff" /></Svg></TaskButton>
                <TaskButton aria-label="Ara"><Svg><circle cx="10" cy="6" r="5" stroke="#fff" strokeWidth="1.300" /><path d="M6.500 9.500L.5 15.500" stroke="#fff" strokeWidth="1.300" /></Svg></TaskButton>
                <TaskButton aria-label="Görev Görünümü"><Svg><path d="M.5 0v2.500h10V0M.5 16v-2.500h10V16M.5 4.500h10v7H.5zM14.500 0v3M14.500 9v7" stroke="#fff" /><path d="M13 4.500h3V8h-3z" fill="#fff" /></Svg></TaskButton>
                <Apps>
                    {apps.map(([name, icon]) => (
                        <TaskButton key={name} aria-label={name} $active={name === 'Chrome'} $open={name === 'Chrome' || name === 'Discord'}>{icon}</TaskButton>
                    ))}
                </Apps>
                <Tray>
                    {tray.map((icon, index) => <React.Fragment key={index}>{icon}</React.Fragment>)}
                    <Clock>17:22:46<br />24.05.2020</Clock>
                    <IconButton aria-label="Bildirimler" $w={34}><Svg><path d="M.5 1.500h15v11h-5L8 15l-2.500-2.500h-5z" stroke="#fff" /></Svg></IconButton>
                    <TrayEnd />
                </Tray>
            </Taskbar>
        </Screen>
    );
}

export default App;
